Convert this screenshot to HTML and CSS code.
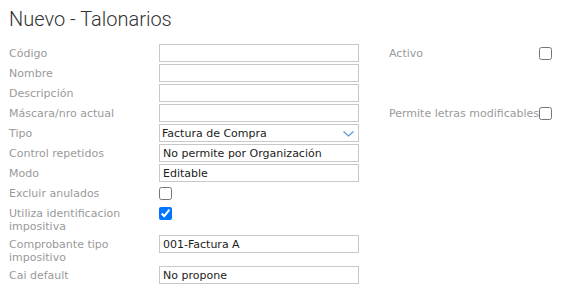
FILE: index.html
```html
<!DOCTYPE html>
<html>
  <head>
    <meta charset="utf-8">
    <title>Nuevo - Talonarios</title>
    <link rel="stylesheet" href="styles.css">
  </head>
  <body>
    <h1>Nuevo - Talonarios</h1>

    <form class="form">
      <label class="lbl" for="codigo">Código</label>
      <input class="txt" type="text" id="codigo">
      <label class="rlbl" for="activo">Activo</label>
      <input class="chk" type="checkbox" id="activo">

      <label class="lbl" for="nombre">Nombre</label>
      <input class="txt" type="text" id="nombre">

      <label class="lbl" for="descripcion">Descripción</label>
      <input class="txt" type="text" id="descripcion">

      <label class="lbl" for="mascara">Máscara/nro actual</label>
      <input class="txt" type="text" id="mascara">
      <label class="rlbl" for="letras">Permite letras modificables</label>
      <input class="chk" type="checkbox" id="letras">

      <label class="lbl" for="tipo">Tipo</label>
      <div class="sel">
        <select id="tipo">
          <option>Factura de Compra</option>
          <option>Factura de Venta</option>
        </select>
        <svg class="arrow" width="11" height="6" viewBox="0 0 11 6">
          <path d="M0.5 0.5 L5.5 5 L10.5 0.5" fill="none" stroke="#5b9bd5" stroke-width="1.3"/>
        </svg>
      </div>

      <label class="lbl" for="control">Control repetidos</label>
      <input class="txt" type="text" id="control" value="No permite por Organización">

      <label class="lbl" for="modo">Modo</label>
      <input class="txt" type="text" id="modo" value="Editable">

      <label class="lbl" for="excluir">Excluir anulados</label>
      <input class="chk" type="checkbox" id="excluir">

      <label class="lbl" for="utiliza">Utiliza identificacion impositiva</label>
      <input class="chk" type="checkbox" id="utiliza" checked>

      <label class="lbl" for="comprobante">Comprobante tipo impositivo</label>
      <input class="txt" type="text" id="comprobante" value="001-Factura A">

      <label class="lbl" for="cai">Cai default</label>
      <input class="txt" type="text" id="cai" value="No propone">
    </form>
  </body>
</html>
```

FILE: styles.css
```css
body {
  margin: 0;
  padding: 8px 9px;
  background: #fff;
  font-family: "DejaVu Sans", Verdana, sans-serif;
  font-size: 11px;
}

h1 {
  margin: 0 0 14px;
  font-family: Roboto, sans-serif;
  font-weight: 300;
  font-size: 20px;
  line-height: 22px;
  color: #333;
}

.form {
  display: grid;
  grid-template-columns: 150px 200px 180px 13px;
  grid-auto-rows: minmax(18px, auto);
  row-gap: 2px;
}

.lbl,
.rlbl {
  padding-top: 3px;
  line-height: 13px;
  color: #9a9a9a;
}
.lbl  { grid-column: 1; }
.rlbl { grid-column: 3; padding-left: 30px; white-space: nowrap; }

.txt,
.sel select {
  box-sizing: border-box;
  width: 200px;
  height: 18px;
  margin: 0;
  padding: 0 3px;
  border: 1px solid #c8c8c8;
  border-radius: 0;
  background: #fff;
  font-family: "DejaVu Sans", Verdana, sans-serif;
  font-size: 11px;
  color: #1c1c1c;
  outline: none;
}

.sel { position: relative; }
.sel select {
  appearance: none;
  -webkit-appearance: none;
  padding-left: 2px;
}
.sel .arrow {
  position: absolute;
  right: 5px;
  top: 7px;
  pointer-events: none;
}

.chk {
  width: 13px;
  height: 13px;
  margin: 3px 0 0;
}
```
